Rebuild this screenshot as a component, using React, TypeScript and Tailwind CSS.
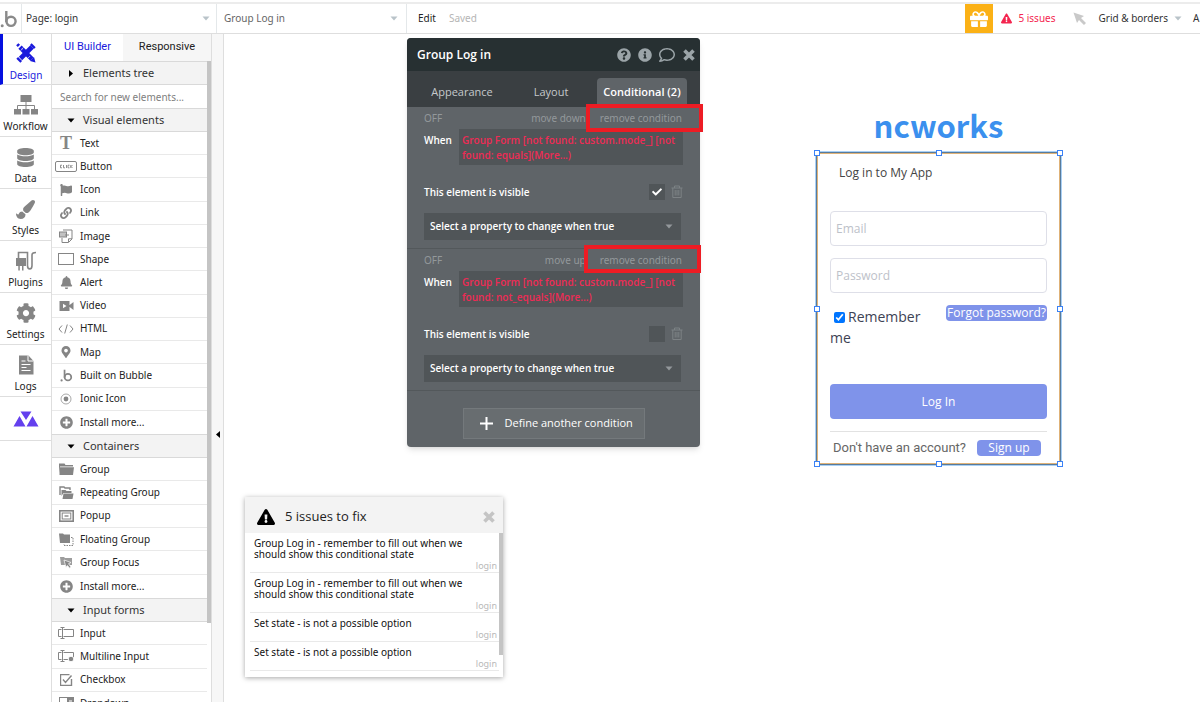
import type { ReactNode } from "react";
import clsx from "clsx";
import { FaBell, FaCheck, FaCog, FaDatabase, FaExclamationTriangle, FaFlag, FaGift, FaInfoCircle, FaLink, FaMapMarkerAlt, FaPaintBrush, FaPlusCircle, FaQuestionCircle, FaRegComment } from "react-icons/fa";

const Svg = ({ w = 16, h = 16, children }: { w?: number; h?: number; children: ReactNode }) => (
  <svg width={w} height={h} viewBox={`0 0 ${w} ${h}`} fill="none" stroke="currentColor" aria-hidden="true">
    {children}
  </svg>
);

const BubbleLogo = ({ size }: { size: number }) => (
  <svg width={size} height={size} viewBox="0 0 18 18" fill="none" stroke="currentColor" strokeWidth="2.4" aria-hidden="true">
    <circle cx="11" cy="11.3" r="4.6" />
    <path d="M6.3 1v11" />
    <circle cx="2.2" cy="15.8" r="1.5" fill="currentColor" stroke="none" />
  </svg>
);

const Caret = ({ className }: { className?: string }) => (
  <svg width="8" height="5" viewBox="0 0 8 5" className={clsx("pointer-events-none shrink-0", className)} fill="currentColor" aria-hidden="true">
    <path d="M0.5 0.5h7L4 4.5z" />
  </svg>
);

const CloseIcon = () => (
  <Svg w={14} h={14}>
    <path d="M2.500 2.500l9 9M11.500 2.500l-9 9" strokeWidth="3.600" />
  </Svg>
);

const DesignIcon = () => (
  <svg width="20" height="20" viewBox="0 0 20 20" fill="none" stroke="currentColor" aria-hidden="true">
    <path d="M4 4.2l12 12" strokeWidth="4.6" />
    <path d="M16 4L4.500 15.500" strokeWidth="4.6" />
    <path d="M1 3.200L3.200 1M14.800 1.200l4 4M1.200 14.800l4 4" strokeWidth="2.400" />
    <path d="M19.500 19.500l-1.500-5.500-4 4z" fill="currentColor" stroke="none" />
    <path d="M4.800 7.500l1.500-1.500M7.300 4.500L5.800 6M12.300 14.800l1.500-1.500" stroke="#fff" strokeWidth="0.800" />
  </svg>
);

const WorkflowIcon = () => (
  <Svg w={24} h={20}>
    <g fill="currentColor" stroke="none">
      <rect x="6.500" y="0" width="11" height="7" />
      <rect x="0" y="14" width="7" height="5.500" />
      <rect x="8.500" y="14" width="7" height="5.500" />
      <rect x="17" y="14" width="7" height="5.500" />
    </g>
    <path d="M12 7v7M3.500 14v-3.500h17V14" />
  </Svg>
);

const PluginsIcon = () => (
  <Svg w={22} h={20}>
    <path d="M1 7h10v8H8.500v4.500h-1.500V15H4.800v4.500H3.300V15H1z" fill="currentColor" stroke="none" />
    <path d="M3.500 7V1.500h9v13c0 4.500 4.500 4.500 4.500 0V4c0-1.800 1-2.500 4-2.500" strokeWidth="1.600" />
  </Svg>
);

const LogsIcon = () => (
  <Svg w={16} h={20}>
    <path d="M1 0.500h9.500L15.500 6v13.500H1z" fill="currentColor" stroke="none" />
    <path d="M10 0.500V6h5.500M3.500 6h4M3.500 9.500h9M3.500 12.500h5M3.500 15.500h9" stroke="#fff" />
  </Svg>
);

const MarkIcon = () => (
  <Svg w={26} h={16}>
    <path d="M7.500 0.500h11L13 9zM6.500 5L12.500 15.500H0.500zM19.500 5L25.500 15.500H13.500z" fill="currentColor" stroke="none" />
  </Svg>
);

const TrashIcon = () => (
  <Svg w={12} h={14}>
    <path d="M0.500 3h11M3.500 3V1h5v2M1.800 3v9.500h8.400V3M4.200 5v5.500M6 5v5.500M7.800 5v5.500" />
  </Svg>
);

const CursorIcon = () => (
  <Svg w={14} h={14}>
    <path d="M0.500 0.500l10.500 3.500-3 2 5 5-2 2-5-5-2 3z" fill="currentColor" stroke="none" />
  </Svg>
);

const ClickIcon = () => (
  <svg width="22" height="11" viewBox="0 0 22 11" fill="none" stroke="currentColor" aria-hidden="true">
    <rect x="0.500" y="0.500" width="21" height="10" rx="1.500" />
    <path d="M7 4.200H5.500v2.600H7M8.500 4v2.800H10M11.500 4v3M14.500 4.200H13v2.600h1.500M15.800 4v3M17.500 4l-1.500 1.500 1.500 1.500" strokeWidth="0.900" />
  </svg>
);

const ImageIcon = () => (
  <Svg w={14} h={14}>
    <path d="M4 1h9v9l-3.500 3.500H3V9M9.500 13V9.800H13M6 6h4" />
    <rect x="0.500" y="3" width="7" height="5" fill="currentColor" fillOpacity="0.500" />
  </Svg>
);

const VideoIcon = () => (
  <Svg w={15} h={12}>
    <path d="M0.500 1h10v10h-10zM10 5.500L14.500 2v8L10 6.500z" fill="currentColor" stroke="none" />
    <path d="M4 3.800L7.500 6 4 8.200z" fill="#fff" stroke="none" />
  </Svg>
);

const HtmlIcon = () => (
  <Svg w={16} h={10}>
    <path d="M4 1.500L1 5l3 3.500M12 1.500L15 5l-3 3.500M9.300 0.500l-2.600 9" />
  </Svg>
);

const RadioIcon = () => (
  <Svg w={12} h={12}>
    <circle cx="6" cy="6" r="5" strokeOpacity="0.700" />
    <circle cx="6" cy="6" r="2.400" fill="currentColor" stroke="none" />
  </Svg>
);

const GroupIcon = () => (
  <Svg w={15} h={12}>
    <path d="M0 10V0.500h5.500l1 1.500H14v1.500H1z" fill="currentColor" stroke="none" />
    <path d="M0.500 4.300H15L14 12H0.500z" fill="currentColor" stroke="none" />
  </Svg>
);

const PopupIcon = () => (
  <Svg w={15} h={12}>
    <rect x="0.800" y="0.800" width="13.400" height="10.400" strokeWidth="1.600" />
    <rect x="3.200" y="3" width="8.600" height="6" />
    <path d="M5.500 6h4" strokeWidth="1.400" />
  </Svg>
);

const RepeatingIcon = () => (
  <Svg w={15} h={13}>
    <path d="M1 9V1h4l1 1h5v2" strokeWidth="1.400" />
    <path d="M2.500 10V4h4l1 1h5v2H4.500z" fill="currentColor" stroke="none" />
    <path d="M4.500 7.500H14.500l-1 5.500H3.500z" fill="currentColor" stroke="none" />
  </Svg>
);

const FloatingIcon = () => (
  <Svg w={15} h={13}>
    <path d="M0 0.500h4l1 1h6V10H1z" fill="currentColor" stroke="none" />
    <path d="M12 4.500h2v8H5V11" strokeDasharray="1.500 1" />
  </Svg>
);

const FocusIcon = () => (
  <Svg w={13} h={13}>
    <path d="M0 1h4l1 1h7v7H1z" fill="currentColor" stroke="none" fillOpacity="0.800" />
    <path d="M4 4l7 2.500-2.500 1.200L11 11l-1.200 1.200-2.500-2.700L6 11.500z" fill="currentColor" stroke="#fff" strokeWidth="0.700" />
  </Svg>
);

const InputIcon = ({ multi }: { multi?: boolean }) => (
  <Svg w={16} h={12}>
    <path d="M3.500 2.500H0.500v7h3M5.500 2.500h10v7h-10M2.500 0.500h4M4.500 0.500v11M2.500 11.500h4" />
    {multi && <circle cx="13" cy="9" r="2.800" fill="currentColor" stroke="#fff" />}
  </Svg>
);

const CheckboxIcon = () => (
  <Svg w={13} h={12}>
    <path d="M11.500 5v6.500H0.500v-11h9M3 5.500l2.500 3L11.500 1.500" strokeWidth="1.400" />
  </Svg>
);

const DropdownIcon = () => (
  <Svg w={15} h={12}>
    <rect x="0.500" y="0.500" width="14" height="6" />
    <path d="M8 0h7v12H8z" fill="currentColor" stroke="none" />
    <path d="M10 4h3" stroke="#fff" />
  </Svg>
);

const railItems: { label: string; icon: ReactNode }[] = [
  { label: "Workflow", icon: <WorkflowIcon /> },
  { label: "Data", icon: <FaDatabase size={19} /> },
  { label: "Styles", icon: <FaPaintBrush size={19} /> },
  { label: "Plugins", icon: <PluginsIcon /> },
  { label: "Settings", icon: <FaCog size={20} /> },
  { label: "Logs", icon: <LogsIcon /> },
];

const visualElements: [string, ReactNode][] = [
  ["Text", <span className="font-['Liberation_Serif',serif] text-[18px] font-bold leading-4">T</span>],
  ["Button", <ClickIcon />],
  ["Icon", <FaFlag size={12} />],
  ["Link", <FaLink size={12} />],
  ["Image", <ImageIcon />],
  ["Shape", <span className="h-3 w-4 border border-current" />],
  ["Alert", <FaBell size={13} />],
  ["Video", <VideoIcon />],
  ["HTML", <HtmlIcon />],
  ["Map", <FaMapMarkerAlt size={12} />],
  ["Built on Bubble", <BubbleLogo size={13} />],
  ["Ionic Icon", <RadioIcon />],
  ["Install more...", <FaPlusCircle size={13} />],
];

const containers: [string, ReactNode][] = [
  ["Group", <GroupIcon />],
  ["Repeating Group", <RepeatingIcon />],
  ["Popup", <PopupIcon />],
  ["Floating Group", <FloatingIcon />],
  ["Group Focus", <FocusIcon />],
  ["Install more...", <FaPlusCircle size={13} />],
];

const inputForms: [string, ReactNode][] = [
  ["Input", <InputIcon />],
  ["Multiline Input", <InputIcon multi />],
  ["Checkbox", <CheckboxIcon />],
  ["Dropdown", <DropdownIcon />],
];

const issues = [
  "Group Log in - remember to fill out when we should show this conditional state",
  "Group Log in - remember to fill out when we should show this conditional state",
  "Set state - is not a possible option",
  "Set state - is not a possible option",
];

function TopBar() {
  return (
    <header className="flex h-[34px] shrink-0 items-stretch overflow-hidden border-b border-[#dedede] pt-[2px]">
      <div className="flex min-w-0 flex-1 items-stretch border-t-2 border-[#ececec]">
        <div className="flex w-[22px] shrink-0 items-center border-r border-[#e4e8ea] text-[#8a8a8a]">
          <BubbleLogo size={18} />
        </div>
        <div className="flex w-[195px] shrink-0 items-center border-r border-[#e4e8ea] pr-1.5">
          <select aria-label="Page" className="min-w-0 flex-1 appearance-none bg-transparent pl-1 text-[#333]">
            <option>Page: login</option>
          </select>
          <Caret className="text-[#b9c3c9]" />
        </div>
        <div className="flex w-[190px] shrink-0 items-center border-r border-[#e4e8ea] pr-2">
          <select aria-label="Element" className="min-w-0 flex-1 appearance-none bg-transparent pl-[7px] text-[#666]">
            <option>Group Log in</option>
          </select>
          <Caret className="text-[#b9c3c9]" />
        </div>
        <button className="pl-[11px] text-[#222]">Edit</button>
        <span className="self-center pl-[13px] text-[#b5b5b5]">Saved</span>

        <div className="ml-auto flex shrink-0 items-center">
          <button aria-label="Gifts" className="flex w-7 items-center justify-center self-stretch bg-[#fbb116] text-white">
            <FaGift size={18} />
          </button>
          <button className="flex items-center gap-1.5 pl-2 text-[#f4254f]">
            <FaExclamationTriangle size={11} />
            5 issues
          </button>
          <button aria-label="Pointer" className="pl-[17px] text-[#c9c9c9]">
            <CursorIcon />
          </button>
          <button className="flex items-center gap-1.5 pl-3 text-[#333]">
            Grid &amp; borders
            <Caret className="text-[#b9c3c9]" />
          </button>
          <button className="w-[18px] pl-[11px] text-left text-[#333]">A</button>
        </div>
      </div>
    </header>
  );
}

function Rail() {
  return (
    <nav className="flex w-[52px] shrink-0 flex-col border-r border-[#dedede] leading-4">
      <a href="#design" className="flex h-[51px] flex-col items-center justify-end gap-1 border-b border-l-[3px] border-b-[#dedede] border-l-[#0510e0] pb-px pr-0.5 text-[#1a1adc]">
        <DesignIcon />
        Design
      </a>
      {railItems.map(({ label, icon }) => (
        <a key={label} href={`#${label.toLowerCase()}`} className="flex h-[52px] flex-col items-center justify-end gap-[3px] border-b border-[#dedede] pb-0.5 text-[#222]">
          <span className="text-[#858585]">{icon}</span>
          {label}
        </a>
      ))}
      <a href="#canvas" aria-label="AI" className="flex h-11 items-center justify-center border-b border-[#dedede] text-[#6440ee]">
        <MarkIcon />
      </a>
    </nav>
  );
}

function SectionHeader({ title, closed }: { title: string; closed?: boolean }) {
  return (
    <button className="flex h-6 w-full items-center gap-2 border-y border-[#d9d9d9] bg-[#f3f3f3] pl-[15px] text-[11px] text-[#333]">
      <Caret className={clsx("text-black", closed && "-rotate-90")} />
      {title}
    </button>
  );
}

function ElementList({ items, className }: { items: [string, ReactNode][]; className: string }) {
  return (
    <ul className={clsx("grid auto-rows-fr", className)}>
      {items.map(([label, icon]) => (
        <li key={label} className="flex border-b border-[#e9e9e9] last:border-b-0">
          <button className="flex flex-1 items-center gap-[3px] pl-[3px] text-left text-[#222]">
            <span className="flex w-[22px] justify-center text-[#858585]">{icon}</span>
            {label}
          </button>
        </li>
      ))}
    </ul>
  );
}

function Palette() {
  return (
    <aside className="flex w-[160px] shrink-0 flex-col border-r border-[#dedede]">
      <div className="grid h-[27px] shrink-0 grid-cols-[71px_1fr] font-['Roboto',sans-serif] text-[11px]">
        <button className="text-[#1a1adc]">UI Builder</button>
        <button className="bg-[#f6f6f6] text-[#222]">Responsive</button>
      </div>
      <div className="flex min-h-0 flex-1 overflow-hidden">
        <div className="min-w-0 flex-1">
          <SectionHeader title="Elements tree" closed />
          <input
            type="search"
            aria-label="Search for new elements"
            placeholder="Search for new elements..."
            className="block h-[23px] w-full pl-2 placeholder:text-[#808080]"
          />
          <SectionHeader title="Visual elements" />
          <ElementList items={visualElements} className="h-[302px]" />
          <SectionHeader title="Containers" />
          <ElementList items={containers} className="h-[140px]" />
          <SectionHeader title="Input forms" />
          <ElementList items={inputForms} className="h-[93px]" />
        </div>
        <div className="h-[562px] w-1 bg-[#c4c4c4]" />
      </div>
    </aside>
  );
}

interface ConditionProps {
  move: string;
  expression: string;
  checked?: boolean;
}

function Condition({ move, expression, checked }: ConditionProps) {
  return (
    <section className="border-b border-[#53585b] px-[17px] pb-2">
      <div className="flex h-[22px] items-center pr-px font-['Noto_Sans',sans-serif] text-[#93989b]">
        <button>OFF</button>
        <button className="ml-auto">{move}</button>
        <button className="ml-[14px]">remove condition</button>
      </div>
      <div className="flex items-start justify-between font-semibold">
        <span className="pt-1 text-white">When</span>
        <button className="h-9 w-[224px] bg-[#505558] pl-[3px] pt-0.5 text-left leading-[15px] text-[#ee2b55]">{expression}</button>
      </div>
      <label className="mt-[19px] flex h-4 items-center font-semibold text-white">
        This element is visible
        <span className="ml-auto grid size-4 place-items-center bg-[#505558]">
          <input type="checkbox" defaultChecked={checked} className="col-start-1 row-start-1 size-4 appearance-none" />
          {checked && <FaCheck size={10} className="pointer-events-none col-start-1 row-start-1" />}
        </span>
        <span className="ml-1.5 text-[#7d8285]">
          <TrashIcon />
        </span>
      </label>
      <div className="mt-[13px] mr-0.5 flex h-[27px] items-center bg-[#505558] pr-2">
        <select aria-label="Property to change" className="min-w-0 flex-1 appearance-none bg-transparent pl-1.5 font-semibold text-white">
          <option>Select a property to change when true</option>
        </select>
        <Caret className="text-[#93989b]" />
      </div>
    </section>
  );
}

function PropertyEditor() {
  return (
    <div className="absolute left-[183px] top-1 w-[293px] rounded bg-[#5f6468] pb-2 font-['Open_Sans','Noto_Sans',sans-serif] shadow-md">
      <div className="flex h-[33px] items-center gap-[7px] rounded-t bg-[#273032] pl-[10px] pr-1 text-[#9ba4a8]">
        <h2 className="mr-auto text-[12px] font-semibold text-white">Group Log in</h2>
        <FaQuestionCircle size={14} />
        <FaInfoCircle size={14} />
        <FaRegComment size={16} />
        <button aria-label="Close">
          <CloseIcon />
        </button>
      </div>
      <div className="flex h-9 items-end bg-[#3a3f42] pr-[13px] text-[11px] text-[#c5c9cb]">
        <button className="h-[29px] w-[110px]">Appearance</button>
        <button className="h-[29px] w-[68px]">Layout</button>
        <button className="ml-auto h-[29px] w-[90px] rounded-t bg-[#5f6468] font-semibold text-white">Conditional (2)</button>
      </div>
      <Condition move="move down" expression="Group Form [not found: custom.mode_] [not found: equals](More...)" checked />
      <Condition move="move up" expression="Group Form [not found: custom.mode_] [not found: not_equals](More...)" />
      <button className="mx-auto mt-[17px] flex h-[31px] w-[182px] items-center gap-3 whitespace-nowrap border border-[#74797c] bg-[#686d70] pl-4 text-[11px] text-white">
        <svg width="13" height="13" viewBox="0 0 13 13" stroke="currentColor" strokeWidth="2" aria-hidden="true">
          <path d="M6.500 0v13M0 6.500h13" />
        </svg>
        Define another condition
      </button>
      {/* highlight boxes over the remove links */}
      <div className="pointer-events-none absolute left-[179px] top-[66px] h-7 w-[117px] border-4 border-[#ed1c24]" />
      <div className="pointer-events-none absolute left-[177px] top-[207px] h-7 w-[117px] border-4 border-[#ed1c24]" />
    </div>
  );
}

function IssuesWindow() {
  return (
    <div className="absolute left-[21px] top-[463px] w-[258px] bg-white pb-[6px] shadow-[0_1px_5px_rgba(0,0,0,0.35)]">
      <div className="flex h-9 items-center bg-[#f3f3f3] pl-3 pr-[7px] pt-1 text-[#222]">
        <FaExclamationTriangle size={18} className="text-black" />
        <h2 className="ml-[10px] font-['Open_Sans',sans-serif] text-[13px]">5 issues to fix</h2>
        <button aria-label="Close" className="ml-auto text-[#c4c4c4]">
          <CloseIcon />
        </button>
      </div>
      <div className="flex items-start">
        <ul className="min-w-0 flex-1 pl-[5px]">
          {issues.map((text, i) => (
            <li key={i} className="border-b border-[#e9e9e9] px-1 pb-px pt-[5px] leading-[11px] text-[#111]">
              <p className="pr-6">{text}</p>
              <p className="-mr-0.5 text-right text-[9px] text-[#b9b9b9]">login</p>
            </li>
          ))}
        </ul>
        <div className="h-[122px] w-1 bg-[#c4c4c4]" />
      </div>
    </div>
  );
}

function Handles() {
  const spots = [
    "left-0 top-0", "left-1/2 top-0", "left-full top-0",
    "left-0 top-1/2", "left-full top-1/2",
    "left-0 top-full", "left-1/2 top-full", "left-full top-full",
  ];
  return (
    <>
      {spots.map((spot) => (
        <span key={spot} className={clsx("absolute size-[6px] -translate-x-1/2 -translate-y-1/2 border border-[#3b82f6] bg-white", spot)} />
      ))}
    </>
  );
}

function LoginGroup() {
  return (
    <div className="absolute left-[592px] top-[66px] w-[245px] font-['Open_Sans','Noto_Sans',sans-serif] text-[12px]">
      <h1 className="mb-1 pt-0.5 text-center font-['Noto_Sans_CJK_SC','Noto_Sans',sans-serif] text-[31px] font-bold leading-[46px] text-[#3b90ee]">ncworks</h1>
      <form className="relative border border-[#587b9c] px-[13px] pb-1.5 outline outline-[#a9d0f5] ring-1 ring-inset ring-[#dfb277]">
        <h2 className="pl-[9px] pt-[10px] leading-5 text-[#444]">Log in to My App</h2>
        <input type="email" aria-label="Email" placeholder="Email" className="mt-7 block h-[35px] w-full rounded border border-[#dedfe8] px-[5px] text-[12px] placeholder:text-[#bdc1c9]" />
        <input type="password" aria-label="Password" placeholder="Password" className="mt-3 block h-[35px] w-full rounded border border-[#dedfe8] px-[5px] text-[12px] placeholder:text-[#bdc1c9]" />
        <div className="mt-3 flex items-start justify-between">
          <label className="w-[100px] pt-px text-[14px] leading-[21px] text-[#3d4254]">
            <input type="checkbox" defaultChecked className="ml-1 mr-[3px] size-[11px] align-[-1px] accent-[#0075ff]" />
            Remember me
          </label>
          <button type="button" className="h-4 w-[101px] whitespace-nowrap rounded-sm bg-[#7f93ea] leading-4 text-white">
            Forgot password?
          </button>
        </div>
        <button type="button" className="mt-9 h-[35px] w-full rounded-sm bg-[#7f93ea] text-white">Log In</button>
        <div className="mt-3 flex items-center border-t border-[#e2e2e2] pt-1.5">
          <span className="whitespace-nowrap pl-[3px] font-['Roboto',sans-serif] text-[13px] leading-5 text-[#666]">Don't have an account?</span>
          <button type="button" className="ml-auto mr-1.5 h-4 w-16 rounded-sm bg-[#7f93ea] leading-4 text-white">Sign up</button>
        </div>
        <Handles />
      </form>
    </div>
  );
}

export default function App() {
  return (
    <div className="flex h-screen flex-col overflow-hidden bg-white font-['Noto_Sans',sans-serif] text-[10px]">
      <TopBar />
      <div className="flex min-h-0 flex-1">
        <Rail />
        <Palette />
        <button aria-label="Collapse panel" className="flex w-3 shrink-0 flex-col items-center border-r border-[#dedede] bg-[#f7f7f7] pt-[398px]">
          <Caret className="rotate-90 text-black" />
        </button>
        <main className="relative min-w-0 flex-1 overflow-hidden">
          <PropertyEditor />
          <IssuesWindow />
          <LoginGroup />
        </main>
      </div>
    </div>
  );
}
